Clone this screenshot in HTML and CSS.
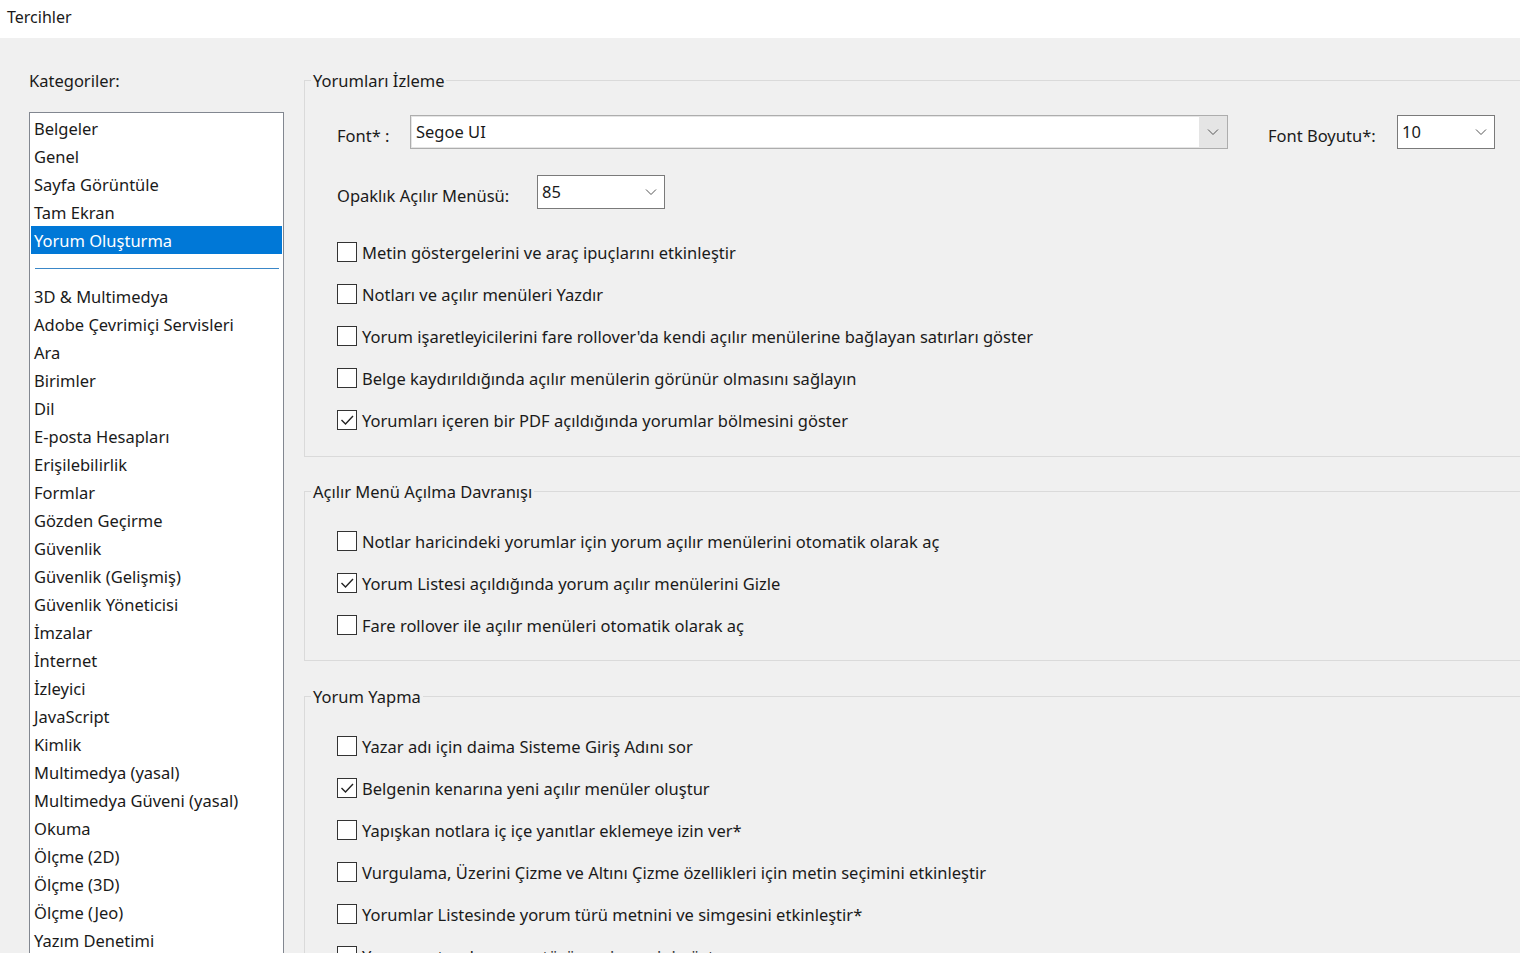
FILE: index.html
```
<!DOCTYPE html>
<html lang="tr">
<head>
    <meta charset="UTF-8">
    <title>Tercihler</title>
    <link rel="stylesheet" href="styles.css">
</head>
<body>
    <div class="titlebar">Tercihler</div>

    <div class="main">
        <div class="side">
            <div class="side-title">Kategoriler:</div>
            <div class="listbox">
                <div class="item">Belgeler</div>
                <div class="item">Genel</div>
                <div class="item">Sayfa Görüntüle</div>
                <div class="item">Tam Ekran</div>
                <div class="item selected">Yorum Oluşturma</div>
                <div class="separator"></div>
                <div class="item">3D &amp; Multimedya</div>
                <div class="item">Adobe Çevrimiçi Servisleri</div>
                <div class="item">Ara</div>
                <div class="item">Birimler</div>
                <div class="item">Dil</div>
                <div class="item">E-posta Hesapları</div>
                <div class="item">Erişilebilirlik</div>
                <div class="item">Formlar</div>
                <div class="item">Gözden Geçirme</div>
                <div class="item">Güvenlik</div>
                <div class="item">Güvenlik (Gelişmiş)</div>
                <div class="item">Güvenlik Yöneticisi</div>
                <div class="item">İmzalar</div>
                <div class="item">İnternet</div>
                <div class="item">İzleyici</div>
                <div class="item">JavaScript</div>
                <div class="item">Kimlik</div>
                <div class="item">Multimedya (yasal)</div>
                <div class="item">Multimedya Güveni (yasal)</div>
                <div class="item">Okuma</div>
                <div class="item">Ölçme (2D)</div>
                <div class="item">Ölçme (3D)</div>
                <div class="item">Ölçme (Jeo)</div>
                <div class="item">Yazım Denetimi</div>
            </div>
        </div>

        <div class="panel">
            <fieldset class="group">
                <legend>Yorumları İzleme</legend>
                <div class="group-body first">
                    <div class="field-row">
                        <span class="label label-font">Font* :</span>
                        <div class="combo combo-font">
                            <span class="combo-text">Segoe UI</span>
                            <span class="combo-btn">
                                <svg width="12" height="8" viewBox="0 0 12 8"><path d="M1 1.5 L6 6.5 L11 1.5" fill="none" stroke="#555" stroke-width="1"/></svg>
                            </span>
                        </div>
                        <span class="label label-size">Font Boyutu*:</span>
                        <div class="select select-size">
                            <span>10</span>
                            <svg width="12" height="8" viewBox="0 0 12 8"><path d="M1 1.5 L6 6.5 L11 1.5" fill="none" stroke="#555" stroke-width="1"/></svg>
                        </div>
                    </div>
                    <div class="field-row opacity-row">
                        <span class="label label-opacity">Opaklık Açılır Menüsü:</span>
                        <div class="select select-opacity">
                            <span>85</span>
                            <svg width="12" height="8" viewBox="0 0 12 8"><path d="M1 1.5 L6 6.5 L11 1.5" fill="none" stroke="#555" stroke-width="1"/></svg>
                        </div>
                    </div>
                    <div class="checks">
                        <label class="check"><span class="box"></span>Metin göstergelerini ve araç ipuçlarını etkinleştir</label>
                        <label class="check"><span class="box"></span>Notları ve açılır menüleri Yazdır</label>
                        <label class="check"><span class="box"></span>Yorum işaretleyicilerini fare rollover'da kendi açılır menülerine bağlayan satırları göster</label>
                        <label class="check"><span class="box"></span>Belge kaydırıldığında açılır menülerin görünür olmasını sağlayın</label>
                        <label class="check"><span class="box checked"><svg width="18" height="18" viewBox="0 0 18 18"><path d="M3.5 9 L7.5 13 L15 5" fill="none" stroke="#222" stroke-width="1.4"/></svg></span>Yorumları içeren bir PDF açıldığında yorumlar bölmesini göster</label>
                    </div>
                </div>
            </fieldset>

            <fieldset class="group">
                <legend>Açılır Menü Açılma Davranışı</legend>
                <div class="group-body">
                    <div class="checks">
                        <label class="check"><span class="box"></span>Notlar haricindeki yorumlar için yorum açılır menülerini otomatik olarak aç</label>
                        <label class="check"><span class="box checked"><svg width="18" height="18" viewBox="0 0 18 18"><path d="M3.5 9 L7.5 13 L15 5" fill="none" stroke="#222" stroke-width="1.4"/></svg></span>Yorum Listesi açıldığında yorum açılır menülerini Gizle</label>
                        <label class="check"><span class="box"></span>Fare rollover ile açılır menüleri otomatik olarak aç</label>
                    </div>
                </div>
            </fieldset>

            <fieldset class="group last">
                <legend>Yorum Yapma</legend>
                <div class="group-body">
                    <div class="checks">
                        <label class="check"><span class="box"></span>Yazar adı için daima Sisteme Giriş Adını sor</label>
                        <label class="check"><span class="box checked"><svg width="18" height="18" viewBox="0 0 18 18"><path d="M3.5 9 L7.5 13 L15 5" fill="none" stroke="#222" stroke-width="1.4"/></svg></span>Belgenin kenarına yeni açılır menüler oluştur</label>
                        <label class="check"><span class="box"></span>Yapışkan notlara iç içe yanıtlar eklemeye izin ver*</label>
                        <label class="check"><span class="box"></span>Vurgulama, Üzerini Çizme ve Altını Çizme özellikleri için metin seçimini etkinleştir</label>
                        <label class="check"><span class="box"></span>Yorumlar Listesinde yorum türü metnini ve simgesini etkinleştir*</label>
                        <label class="check"><span class="box"></span>Yorum notunda yorum türü ve simgesini göster</label>
                    </div>
                </div>
            </fieldset>
        </div>
    </div>
</body>
</html>
```

FILE: styles.css
```
html, body {
    margin: 0;
    padding: 0;
    height: 100%;
    overflow: hidden;
}
body {
    font-family: 'Noto Sans', 'Open Sans', sans-serif;
    font-size: 16.5px;
    color: #1a1a1a;
    background-color: #f0f0f0;
}
.titlebar {
    height: 38px;
    line-height: 34px;
    padding-left: 7px;
    font-size: 16px;
    background-color: #fff;
}
.main {
    display: flex;
    gap: 20px;
    padding: 30px 0 0 29px;
}

/* sol liste */
.side {
    width: 255px;
    flex: none;
}
.side-title {
    height: 24px;
    line-height: 24px;
    margin-top: 1px;
}
.listbox {
    margin-top: 19px;
    height: 900px;
    overflow: hidden;
    background-color: #fff;
    border: 1px solid #828790;
    padding: 1px;
}
.item {
    height: 28px;
    line-height: 29px;
    padding-left: 3px;
    white-space: nowrap;
}
.item.selected {
    background-color: #0078d7;
    color: #fff;
}
.separator {
    height: 28px;
    display: flex;
    align-items: center;
    padding: 0 3px 0 4px;
}
.separator::before {
    content: '';
    flex: 1;
    height: 1px;
    background-color: #3a87c8;
}

/* sağ panel */
.panel {
    flex: 1;
    min-width: 0;
}
.group {
    margin: 0 0 22px 0;
    padding: 0;
    border: 1px solid #dadada;
    border-right: none;
    min-width: 0;
}
.group legend {
    height: 24px;
    line-height: 25px;
    margin-left: 6px;
    padding: 0 2px;
}
.group.last {
    margin-top: 23px;
    border-bottom: none;
}
.group-body {
    padding: 17px 0 14px 32px;
}
.group-body.first {
    padding-top: 23px;
    padding-bottom: 15px;
}

.field-row {
    display: flex;
    align-items: center;
    height: 34px;
}
.opacity-row {
    margin-top: 26px;
    margin-bottom: 22px;
}
.label {
    flex: none;
}
.label-font {
    width: 73px;
    padding-top: 6px;
}
.label-size {
    width: 129px;
    margin-left: 40px;
    padding-top: 6px;
}
.label-opacity {
    width: 200px;
    padding-top: 6px;
}

.combo {
    display: flex;
    height: 34px;
    box-sizing: border-box;
    border: 1px solid #adadad;
    background-color: #e5e5e5;
}
.combo-font {
    width: 818px;
}
.combo-text {
    flex: 1;
    background-color: #fff;
    padding-left: 4px;
    line-height: 30px;
    margin: 1px 0 1px 1px;
}
.combo-btn {
    width: 28px;
    display: flex;
    align-items: center;
    justify-content: center;
}

.select {
    display: flex;
    align-items: center;
    justify-content: space-between;
    height: 34px;
    box-sizing: border-box;
    border: 1px solid #7a7a7a;
    background-color: #fff;
    padding: 0 7px 0 4px;
}
.select span {
    line-height: 30px;
}
.select-size {
    width: 98px;
}
.select-opacity {
    width: 128px;
}

.check {
    display: flex;
    align-items: center;
    height: 42px;
    white-space: nowrap;
}
.box {
    width: 20px;
    height: 20px;
    box-sizing: border-box;
    border: 1px solid #333;
    background-color: #fff;
    margin-right: 5px;
    display: flex;
    align-items: center;
    justify-content: center;
    flex: none;
}
```
